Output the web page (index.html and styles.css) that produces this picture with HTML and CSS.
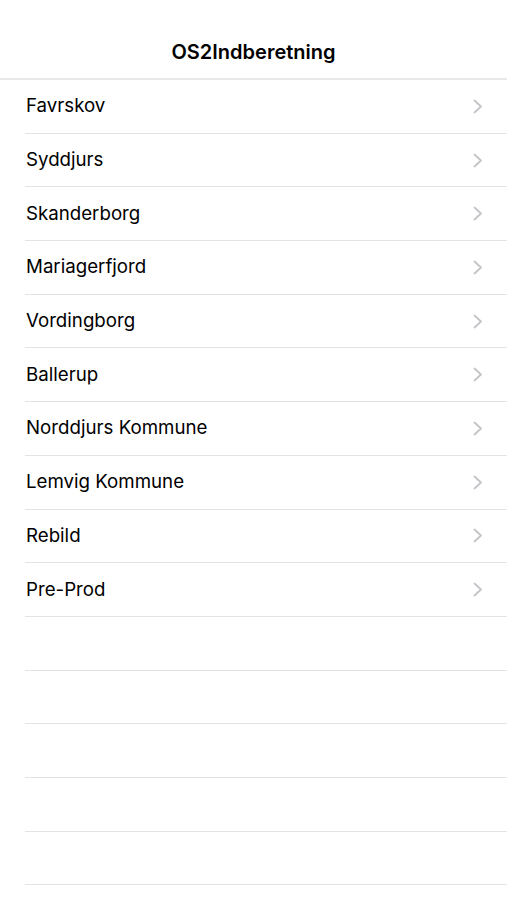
FILE: index.html
```html
<!DOCTYPE html>
<html lang="da">
<head>
  <meta charset="UTF-8">
  <title>OS2Indberetning</title>
  <link rel="stylesheet" href="styles.css">
</head>
<body>

  <div class="navbar">
    <div class="title">OS2Indberetning</div>
  </div>

  <ul class="list" id="kommuner"></ul>

  <script>
    const kommuner = ["Favrskov", "Syddjurs", "Skanderborg", "Mariagerfjord", "Vordingborg",
      "Ballerup", "Norddjurs Kommune", "Lemvig Kommune", "Rebild", "Pre-Prod"];
    const liste = document.getElementById('kommuner');

    // Rækker med kommuner
    kommuner.forEach(navn => {
      const li = document.createElement('li');
      li.className = 'row';
      li.innerHTML = `<span class="label">${navn}</span>
        <svg class="chevron" width="10" height="15" viewBox="0 0 10 15">
          <path d="M1.5 1.5 L8 7.5 L1.5 13.5" fill="none" stroke="#c4c4c8" stroke-width="1.8" stroke-linecap="round" stroke-linejoin="round"/>
        </svg>`;
      liste.appendChild(li);
    });

    // Tomme rækker nederst
    for (let i = 0; i < 6; i++) {
      const li = document.createElement('li');
      li.className = 'row empty';
      liste.appendChild(li);
    }
  </script>
</body>
</html>
```

FILE: styles.css
```css
body {
  margin: 0;
  background: #fff;
  font-family: Inter, "Liberation Sans", Arial, sans-serif;
  color: #000;
  height: 100vh;
  overflow: hidden;
}

.navbar {
  padding-top: 26px;
  height: 52px;
  border-bottom: 2px solid #e8e8e8;
  display: flex;
  justify-content: center;
  align-items: center;
}

.navbar .title {
  font-size: 20px;
  font-weight: 600;
}

.list {
  list-style: none;
  margin: 0;
  padding: 0 0 0 25px;
}

.row {
  height: 52.7px;
  border-bottom: 1px solid #e3e3e3;
  display: flex;
  align-items: center;
  justify-content: space-between;
  padding-left: 1px;
  padding-right: 24px;
}

.row .label {
  font-size: 18.7px;
  margin-top: -1px;
}

.chevron {
  display: block;
}
```
